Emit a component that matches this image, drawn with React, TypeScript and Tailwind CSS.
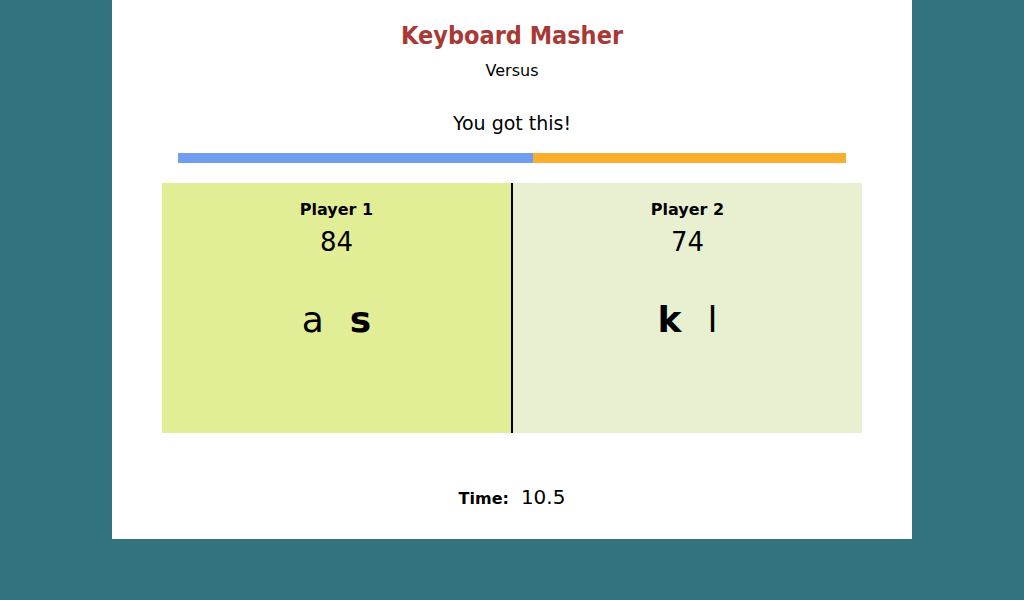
import React from 'react';

interface PlayerPanelProps {
  name: string;
  score: number;
  keys: { ch: string; down: boolean }[];
  active?: boolean;
}

const PlayerPanel: React.FC<PlayerPanelProps> = ({ name, score, keys, active }) => {
  return (
    <div className={`flex-1 flex flex-col items-center pt-[17px] ${active ? 'bg-[#e2ee95]' : 'bg-[#e9f0d2]'}`}>
      <div className="text-[16px] font-bold leading-[20px]">{name}</div>
      <div className="text-[26px] leading-[30px] mt-[7px]">{score}</div>
      <div className="flex items-baseline gap-[26px] mt-[41px] text-[36px] leading-[44px]">
        {keys.map((k) => (
          <span key={k.ch} className={k.down ? 'font-bold' : 'font-normal'}>
            {k.ch}
          </span>
        ))}
      </div>
    </div>
  );
};

const App: React.FC = () => {
  const p1 = 84;
  const p2 = 74;
  const share = (p1 / (p1 + p2)) * 100;

  return (
    <div className="min-h-[600px] bg-[#33737f] font-['DejaVu_Sans',sans-serif] text-black">
      <div className="w-[800px] h-[539px] mx-auto bg-white flex flex-col items-center pt-[19px]">
        <h1 className="text-[25px] leading-[34px] font-bold text-[#a83a36] font-['DejaVu_Sans_Condensed','DejaVu_Sans',sans-serif]">
          Keyboard Masher
        </h1>
        <div className="text-[16px] leading-[20px] mt-[8px]">Versus</div>
        <div className="text-[19px] leading-[24px] mt-[30px]">You got this!</div>

        <div className="w-[668px] h-[10px] mt-[18px] flex bg-[#f9ae2e]">
          <div className="h-full bg-[#6f9ef0]" style={{ width: `${share}%` }} />
        </div>

        <div className="w-[700px] h-[250px] mt-[20px] flex">
          <PlayerPanel
            name="Player 1"
            score={p1}
            active
            keys={[
              { ch: 'a', down: false },
              { ch: 's', down: true },
            ]}
          />
          <div className="w-[2px] bg-black" />
          <PlayerPanel
            name="Player 2"
            score={p2}
            keys={[
              { ch: 'k', down: true },
              { ch: 'l', down: false },
            ]}
          />
        </div>

        <div className="flex items-baseline gap-[12px] mt-[49px]">
          <span className="text-[16px] font-bold">Time:</span>
          <span className="text-[20px]">10.5</span>
        </div>
      </div>
    </div>
  );
};

export default App;
